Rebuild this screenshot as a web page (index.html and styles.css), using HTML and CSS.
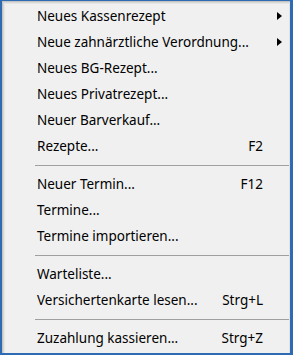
FILE: index.html
```html
<!DOCTYPE html>
<html lang="de">
<head>
    <meta charset="UTF-8">
    <title>Kontextmenü</title>
    <link rel="stylesheet" href="styles.css">
</head>
<body>
    <div class="menu">
        <div class="item"><span class="label">Neues Kassenrezept</span><span class="key"></span><span class="arrow"></span></div>
        <div class="item"><span class="label">Neue zahnärztliche Verordnung...</span><span class="key"></span><span class="arrow"></span></div>
        <div class="item"><span class="label">Neues BG-Rezept...</span></div>
        <div class="item"><span class="label">Neues Privatrezept...</span></div>
        <div class="item"><span class="label">Neuer Barverkauf...</span></div>
        <div class="item"><span class="label">Rezepte...</span><span class="key">F2</span></div>
        <div class="sep"></div>
        <div class="item"><span class="label">Neuer Termin...</span><span class="key">F12</span></div>
        <div class="item"><span class="label">Termine...</span></div>
        <div class="item"><span class="label">Termine importieren...</span></div>
        <div class="sep"></div>
        <div class="item"><span class="label">Warteliste...</span></div>
        <div class="item"><span class="label">Versichertenkarte lesen...</span><span class="key">Strg+L</span></div>
        <div class="sep"></div>
        <div class="item"><span class="label">Zuzahlung kassieren...</span><span class="key">Strg+Z</span></div>
    </div>
</body>
</html>
```

FILE: styles.css
```css
body {
    margin: 0;
    font-family: 'Noto Sans', 'Open Sans', sans-serif;
}

.menu {
    width: 293px;
    height: 355px;
    box-sizing: border-box;
    border: 2px solid #2f6bb3;
    border-top-width: 1px;
    border-right-width: 3px;
    background-color: #f0f0f0;
    padding-top: 2px;
    box-shadow: inset 1px 1px 0 #c4c4c4, inset 2px 2px 0 #d8d8d8, inset 3px 3px 0 #e6e6e6, inset -1px 0 0 #e2e2e2;
}

.item {
    display: grid;
    grid-template-columns: 1fr auto 19px;
    align-items: center;
    height: 26px;
    padding: 0 8px 0 35px;
    font-size: 13.5px;
    color: #000;
}

.key {
    text-align: right;
}

.arrow {
    justify-self: end;
    width: 0;
    height: 0;
}

.item .arrow:empty {
    border-top: 4.5px solid transparent;
    border-bottom: 4.5px solid transparent;
    border-left: 5px solid #000;
}

.sep {
    height: 12px;
    margin: 0 1px 0 33px;
    display: flex;
    align-items: center;
}

.sep::before {
    content: "";
    flex: 1;
    height: 1px;
    background-color: #a0a0a0;
}
```
